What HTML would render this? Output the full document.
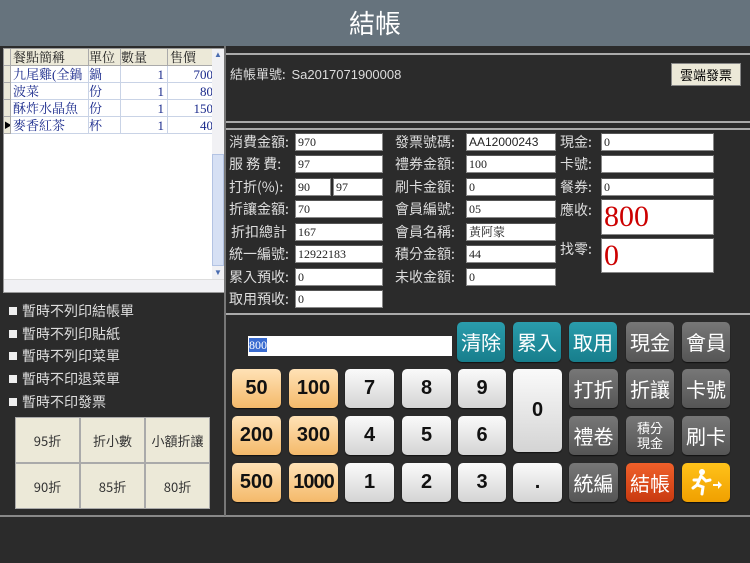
<!DOCTYPE html>
<html><head><meta charset="utf-8"><style>
*{margin:0;padding:0;box-sizing:border-box}
body{width:750px;height:563px;background:#2b2b2b;position:relative;overflow:hidden;font-family:"Liberation Serif","Noto Serif CJK SC","Noto Sans CJK TC",serif;}
.a{position:absolute}
.title{left:0;top:0;width:750px;height:46px;background:#66737d;color:#fff;font-size:26px;text-align:center;line-height:46px;font-family:"Noto Sans CJK TC",sans-serif}
.grid{left:3px;top:48px;width:221px;height:245px;background:#fff;border:1px solid #999}
.c{position:absolute;font-size:13px;line-height:17px;height:17px;border-right:1px solid #c9d3e6;border-bottom:1px solid #c9d3e6;overflow:hidden;white-space:nowrap;color:#1a2a8c}
.h{background:#ece9d8;color:#222;border-color:#aaa}
.lbl{position:absolute;color:#ddd;font-size:14px;line-height:18px;font-family:"Noto Sans CJK TC",sans-serif;white-space:nowrap}
.in{position:absolute;background:#fff;border:1px solid #888;border-top-color:#555;font-size:12px;line-height:16px;height:18px;padding-left:2px;color:#222}
.btn{position:absolute;border-radius:5px;text-align:center;font-family:"Noto Sans CJK TC",sans-serif;font-size:20px;color:#fff;box-shadow:0 1px 1px #111}
.o{background:linear-gradient(#ffe2b6,#f4b96a);color:#111;font-family:"Liberation Sans",sans-serif;font-weight:bold;font-size:20px;line-height:39px}
.g{background:linear-gradient(#fafafa,#d4d4d4);color:#111;font-family:"Liberation Sans",sans-serif;font-weight:bold;font-size:20px;line-height:39px}
.d{background:linear-gradient(#777,#555);line-height:39px}
.t{background:linear-gradient(#2a9cac,#177e8c);line-height:40px}
.cb{position:absolute;left:9px;color:#ddd;font-size:14px;font-family:"Noto Sans CJK TC",sans-serif;line-height:18px}
.cb:before{content:"";display:inline-block;width:8px;height:8px;background:#eee;margin-right:5px;vertical-align:1px}
.db{position:absolute;width:65px;height:46px;background:#ece9d8;border:1px solid #aaa;font-size:13px;line-height:46px;text-align:center;color:#333;font-family:"Noto Sans CJK TC",sans-serif}
</style></head><body>
<div class="a title">結帳</div>

<div class="a grid">
 <div class="c h" style="left:0;top:0;width:7px"></div>
 <div class="c h" style="left:7px;top:0;width:78px;padding-left:2px">餐點簡稱</div>
 <div class="c h" style="left:85px;top:0;width:32px">單位</div>
 <div class="c h" style="left:117px;top:0;width:47px">數量</div>
 <div class="c h" style="left:164px;top:0;width:46px;padding-left:2px">售價</div>
 <div class="c h" style="left:0;top:17px;width:7px"></div>
 <div class="c" style="left:7px;top:17px;width:78px;padding-left:2px">九尾雞(全鍋</div>
 <div class="c" style="left:85px;top:17px;width:32px">鍋</div>
 <div class="c" style="left:117px;top:17px;width:47px;text-align:right;padding-right:3px">1</div>
 <div class="c" style="left:164px;top:17px;width:46px;text-align:right">700</div>
 <div class="c h" style="left:0;top:34px;width:7px"></div>
 <div class="c" style="left:7px;top:34px;width:78px;padding-left:2px">波菜</div>
 <div class="c" style="left:85px;top:34px;width:32px">份</div>
 <div class="c" style="left:117px;top:34px;width:47px;text-align:right;padding-right:3px">1</div>
 <div class="c" style="left:164px;top:34px;width:46px;text-align:right">80</div>
 <div class="c h" style="left:0;top:51px;width:7px"></div>
 <div class="c" style="left:7px;top:51px;width:78px;padding-left:2px">酥炸水晶魚</div>
 <div class="c" style="left:85px;top:51px;width:32px">份</div>
 <div class="c" style="left:117px;top:51px;width:47px;text-align:right;padding-right:3px">1</div>
 <div class="c" style="left:164px;top:51px;width:46px;text-align:right">150</div>
 <div class="c h" style="left:0;top:68px;width:7px;font-size:8px;color:#000">▶</div>
 <div class="c" style="left:7px;top:68px;width:78px;padding-left:2px">麥香紅茶</div>
 <div class="c" style="left:85px;top:68px;width:32px">杯</div>
 <div class="c" style="left:117px;top:68px;width:47px;text-align:right;padding-right:3px">1</div>
 <div class="c" style="left:164px;top:68px;width:46px;text-align:right">40</div>
 <div class="a" style="left:208px;top:0;width:12px;height:230px;background:#f1f1f4"></div>
 <div class="a" style="left:208px;top:0;width:12px;height:12px;font-size:8px;color:#4a6cb0;text-align:center;line-height:12px">▲</div>
 <div class="a" style="left:208px;top:218px;width:12px;height:12px;font-size:8px;color:#4a6cb0;text-align:center;line-height:12px">▼</div>
 <div class="a" style="left:208px;top:105px;width:12px;height:112px;background:#d6e0f4;border:1px solid #b3c3e3"></div>
 <div class="a" style="left:0;top:230px;width:220px;height:13px;background:#f1f1f4;border-top:1px solid #ddd"></div>
</div>

<div class="cb" style="top:302px">暫時不列印結帳單</div>
<div class="cb" style="top:325px">暫時不列印貼紙</div>
<div class="cb" style="top:347px">暫時不列印菜單</div>
<div class="cb" style="top:370px">暫時不印退菜單</div>
<div class="cb" style="top:393px">暫時不印發票</div>
<div class="db" style="left:15px;top:417px">95折</div>
<div class="db" style="left:80px;top:417px">折小數</div>
<div class="db" style="left:145px;top:417px">小額折讓</div>
<div class="db" style="left:15px;top:463px">90折</div>
<div class="db" style="left:80px;top:463px">85折</div>
<div class="db" style="left:145px;top:463px">80折</div>
<div class="a" style="left:0;top:515px;width:750px;height:2px;background:#888"></div>
<div class="a" style="left:224px;top:46px;width:2px;height:470px;background:#777"></div>

<div class="a" style="left:226px;top:53px;width:524px;height:70px;border-top:2px solid #aaa;border-bottom:2px solid #aaa"></div>
<div class="lbl" style="left:230px;top:65px;font-size:13px">結帳單號: &nbsp;<span style="font-family:'Liberation Sans',sans-serif">Sa2017071900008</span></div>
<div class="a" style="left:671px;top:63px;width:70px;height:23px;background:#ece9d8;border:1px solid #888;font-size:13px;line-height:21px;text-align:center;font-family:'Noto Sans CJK TC',sans-serif">雲端發票</div>
<div class="a" style="left:226px;top:128px;width:524px;height:187px;border-top:2px solid #aaa;border-bottom:2px solid #aaa"></div>

<div class="lbl" style="left:229px;top:133px">消費金額:</div><div class="in" style="left:295px;top:133px;width:88px">970</div>
<div class="lbl" style="left:229px;top:155px">服 務 費:</div><div class="in" style="left:295px;top:155px;width:88px">97</div>
<div class="lbl" style="left:229px;top:178px">打折(%):</div><div class="in" style="left:295px;top:178px;width:36px">90</div><div class="in" style="left:333px;top:178px;width:50px">97</div>
<div class="lbl" style="left:229px;top:200px">折讓金額:</div><div class="in" style="left:295px;top:200px;width:88px">70</div>
<div class="lbl" style="left:231px;top:223px">折扣總計</div><div class="in" style="left:295px;top:223px;width:88px">167</div>
<div class="lbl" style="left:229px;top:245px">統一編號:</div><div class="in" style="left:295px;top:245px;width:88px">12922183</div>
<div class="lbl" style="left:229px;top:268px">累入預收:</div><div class="in" style="left:295px;top:268px;width:88px">0</div>
<div class="lbl" style="left:229px;top:290px">取用預收:</div><div class="in" style="left:295px;top:290px;width:88px">0</div>

<div class="lbl" style="left:395px;top:133px">發票號碼:</div><div class="in" style="left:466px;top:133px;width:90px;font-family:'Liberation Sans',sans-serif">AA12000243</div>
<div class="lbl" style="left:395px;top:155px">禮券金額:</div><div class="in" style="left:466px;top:155px;width:90px">100</div>
<div class="lbl" style="left:395px;top:178px">刷卡金額:</div><div class="in" style="left:466px;top:178px;width:90px">0</div>
<div class="lbl" style="left:395px;top:200px">會員編號:</div><div class="in" style="left:466px;top:200px;width:90px">05</div>
<div class="lbl" style="left:395px;top:223px">會員名稱:</div><div class="in" style="left:466px;top:223px;width:90px">黃阿蒙</div>
<div class="lbl" style="left:395px;top:245px">積分金額:</div><div class="in" style="left:466px;top:245px;width:90px">44</div>
<div class="lbl" style="left:395px;top:268px">未收金額:</div><div class="in" style="left:466px;top:268px;width:90px">0</div>

<div class="lbl" style="left:560px;top:133px">現金:</div><div class="in" style="left:601px;top:133px;width:113px">0</div>
<div class="lbl" style="left:560px;top:155px">卡號:</div><div class="in" style="left:601px;top:155px;width:113px"></div>
<div class="lbl" style="left:560px;top:178px">餐券:</div><div class="in" style="left:601px;top:178px;width:113px">0</div>
<div class="lbl" style="left:560px;top:201px">應收:</div><div class="in" style="left:601px;top:199px;width:113px;height:36px;font-size:30px;line-height:34px;color:#c00">800</div>
<div class="lbl" style="left:560px;top:240px">找零:</div><div class="in" style="left:601px;top:238px;width:113px;height:35px;font-size:30px;line-height:34px;color:#c00">0</div>

<div class="a" style="left:248px;top:336px;width:204px;height:20px;background:#fff"><span style="background:#3a6cd0;color:#fff;font-size:12px;line-height:18px;margin-left:1px">800</span></div>

<div class="btn t" style="left:457px;top:322px;width:48px;height:40px">清除</div>
<div class="btn t" style="left:513px;top:322px;width:48px;height:40px">累入</div>
<div class="btn t" style="left:569px;top:322px;width:48px;height:40px">取用</div>
<div class="btn d" style="left:626px;top:322px;width:48px;height:40px">現金</div>
<div class="btn d" style="left:682px;top:322px;width:48px;height:40px">會員</div>

<div class="btn o" style="left:232px;top:369px;width:49px;height:39px">50</div>
<div class="btn o" style="left:289px;top:369px;width:49px;height:39px">100</div>
<div class="btn g" style="left:345px;top:369px;width:49px;height:39px">7</div>
<div class="btn g" style="left:402px;top:369px;width:49px;height:39px">8</div>
<div class="btn g" style="left:458px;top:369px;width:48px;height:39px">9</div>
<div class="btn g" style="left:513px;top:369px;width:49px;height:83px;line-height:83px">0</div>
<div class="btn d" style="left:569px;top:369px;width:49px;height:39px">打折</div>
<div class="btn d" style="left:626px;top:369px;width:48px;height:39px">折讓</div>
<div class="btn d" style="left:682px;top:369px;width:48px;height:39px">卡號</div>

<div class="btn o" style="left:232px;top:416px;width:49px;height:39px">200</div>
<div class="btn o" style="left:289px;top:416px;width:49px;height:39px">300</div>
<div class="btn g" style="left:345px;top:416px;width:49px;height:39px">4</div>
<div class="btn g" style="left:402px;top:416px;width:49px;height:39px">5</div>
<div class="btn g" style="left:458px;top:416px;width:48px;height:39px">6</div>
<div class="btn d" style="left:569px;top:416px;width:49px;height:39px">禮卷</div>
<div class="btn d" style="left:626px;top:416px;width:48px;height:39px;font-size:13px;line-height:15px;padding-top:4px">積分<br>現金</div>
<div class="btn d" style="left:682px;top:416px;width:48px;height:39px">刷卡</div>

<div class="btn o" style="left:232px;top:463px;width:49px;height:39px">500</div>
<div class="btn o" style="left:289px;top:463px;width:49px;height:39px;letter-spacing:-1px">1000</div>
<div class="btn g" style="left:345px;top:463px;width:49px;height:39px">1</div>
<div class="btn g" style="left:402px;top:463px;width:49px;height:39px">2</div>
<div class="btn g" style="left:458px;top:463px;width:48px;height:39px">3</div>
<div class="btn g" style="left:513px;top:463px;width:49px;height:39px">.</div>
<div class="btn d" style="left:569px;top:463px;width:49px;height:39px">統編</div>
<div class="btn" style="left:626px;top:463px;width:48px;height:39px;line-height:39px;background:linear-gradient(#f0602a,#c83a10)">結帳</div>
<div class="btn" style="left:682px;top:463px;width:48px;height:39px;background:linear-gradient(#ffc21a,#f0a000)">
 <svg width="48" height="39" viewBox="0 0 48 39"><circle cx="20" cy="9" r="3" fill="#fff"/><path d="M19 13 L15 22 L11 25 M15 22 L21 24 L20 31 M19 13 L24 18 L28 17 M17 17 L12 17" stroke="#fff" stroke-width="3" fill="none" stroke-linecap="round"/><path d="M31 21 h5 v-3 l4 4 l-4 4 v-3 h-5z" fill="#fff"/></svg>
</div>
</body></html>
